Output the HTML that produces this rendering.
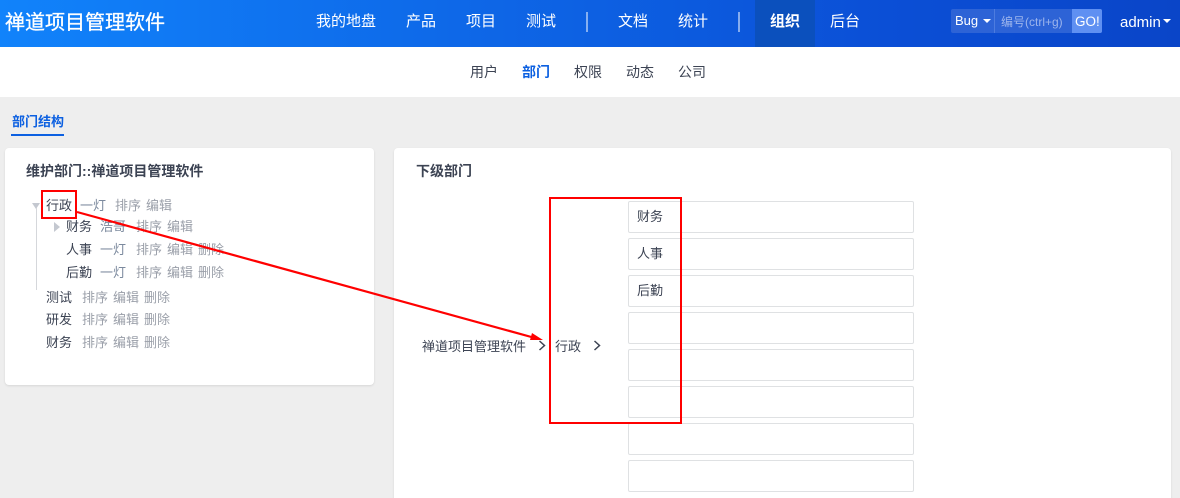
<!DOCTYPE html>
<html lang="zh-CN"><head><meta charset="utf-8"><title>部门结构</title>
<style>
*{box-sizing:border-box}
html,body{margin:0;padding:0;width:1180px;height:498px;overflow:hidden}
#root{position:relative;width:1180px;height:498px;overflow:hidden;background:#eee;font-family:"Liberation Sans","Noto Sans CJK SC",sans-serif;font-size:13px;color:#3c4353}
.t{position:absolute;white-space:nowrap;line-height:20px}
#hd{position:absolute;left:0;top:0;width:1180px;height:47px;background:linear-gradient(90deg,#1183fb,#0b4fd6 75%,#0a45c8)}
#hd .t{color:#fff;font-size:15px;line-height:20px;top:12px}
.sep{position:absolute;top:12px;width:2px;height:20px;background:rgba(255,255,255,.5)}
#sub{position:absolute;left:0;top:47px;width:1180px;height:50px;background:#fff}
#sub .t{font-size:14px;top:15px}
.card{position:absolute;background:#fff;border-radius:4px;box-shadow:0 1px 2px rgba(0,0,0,.1)}
.g{color:#9a9fa9}.b{color:#7c8a9e}
.in{position:absolute;left:628px;width:286px;height:32px;border:1px solid #dfe1e3;border-radius:2px;background:#fff;padding:0 8px;line-height:29px;color:#3c4353}
</style></head><body>
<div id="root">
<div id="hd">
<div class="t" style="left:5px;top:11px;font-size:20px;line-height:24px;-webkit-text-stroke:.3px #fff">禅道项目管理软件</div>
<div class="t" style="left:316px">我的地盘</div>
<div class="t" style="left:406px">产品</div>
<div class="t" style="left:466px">项目</div>
<div class="t" style="left:526px">测试</div>
<div class="sep" style="left:586px"></div>
<div class="t" style="left:618px">文档</div>
<div class="t" style="left:678px">统计</div>
<div class="sep" style="left:738px"></div>
<div style="position:absolute;left:755px;top:0;width:60px;height:47px;background:#0b50bd"></div>
<div class="t" style="left:770px;font-weight:700">组织</div>
<div class="t" style="left:830px">后台</div>
<div style="position:absolute;left:951px;top:9px;width:151px;height:24px;background:#2d63d6;border-radius:2px"></div>
<div style="position:absolute;left:994px;top:9px;width:1px;height:24px;background:#4d7cdf"></div>
<div style="position:absolute;left:1072px;top:9px;width:30px;height:24px;background:#5f90f2;border-radius:0 2px 2px 0"></div>
<div class="t" style="left:955px;top:11px;font-size:13px">Bug</div>
<div style="position:absolute;left:983px;top:19px;border:4px solid transparent;border-top:4px solid #fff;border-bottom:0"></div>
<div class="t" style="left:1001px;top:12px;font-size:12px;color:#9db5ec">编号(ctrl+g)</div>
<div class="t" style="left:1075px;top:12px;font-size:13.500px">GO!</div>
<div class="t" style="left:1120px;top:13px;font-size:15px">admin</div>
<div style="position:absolute;left:1163px;top:19px;border:4px solid transparent;border-top:4px solid #fff;border-bottom:0"></div>
</div>
<div id="sub">
<div class="t" style="left:470px">用户</div>
<div class="t" style="left:522px;color:#0c60e1;font-weight:700">部门</div>
<div class="t" style="left:574px">权限</div>
<div class="t" style="left:626px">动态</div>
<div class="t" style="left:678px">公司</div>
</div>
<div class="t" style="left:12px;top:112px;color:#0c60e1;font-weight:700">部门结构</div>
<div style="position:absolute;left:11px;top:134px;width:53px;height:2px;background:#0c60e1"></div>

<div class="card" style="left:5px;top:148px;width:369px;height:237px"></div>
<div class="t" style="left:26px;top:161px;font-size:14px;font-weight:700">维护部门::禅道项目管理软件</div>
<div style="position:absolute;left:32px;top:203px;border:4.500px solid transparent;border-top:6px solid #c4c8d0;border-bottom:0"></div>
<div style="position:absolute;left:54px;top:222px;border:5px solid transparent;border-left:6px solid #c4c8d0;border-right:0"></div>
<div style="position:absolute;left:36px;top:208px;width:1px;height:82px;background:#d5d7db"></div>
<div class="t" style="left:46px;top:196px">行政</div><div class="t b" style="left:80px;top:196px">一灯</div><div class="t g" style="left:115px;top:196px">排序</div><div class="t g" style="left:146px;top:196px">编辑</div>
<div class="t" style="left:66px;top:217px">财务</div><div class="t b" style="left:100px;top:217px">浩哥</div><div class="t g" style="left:136px;top:217px">排序</div><div class="t g" style="left:167px;top:217px">编辑</div>
<div class="t" style="left:66px;top:240px">人事</div><div class="t b" style="left:100px;top:240px">一灯</div><div class="t g" style="left:136px;top:240px">排序</div><div class="t g" style="left:167px;top:240px">编辑</div><div class="t g" style="left:198px;top:240px">删除</div>
<div class="t" style="left:66px;top:263px">后勤</div><div class="t b" style="left:100px;top:263px">一灯</div><div class="t g" style="left:136px;top:263px">排序</div><div class="t g" style="left:167px;top:263px">编辑</div><div class="t g" style="left:198px;top:263px">删除</div>
<div class="t" style="left:46px;top:288px">测试</div><div class="t g" style="left:82px;top:288px">排序</div><div class="t g" style="left:113px;top:288px">编辑</div><div class="t g" style="left:144px;top:288px">删除</div>
<div class="t" style="left:46px;top:310px">研发</div><div class="t g" style="left:82px;top:310px">排序</div><div class="t g" style="left:113px;top:310px">编辑</div><div class="t g" style="left:144px;top:310px">删除</div>
<div class="t" style="left:46px;top:333px">财务</div><div class="t g" style="left:82px;top:333px">排序</div><div class="t g" style="left:113px;top:333px">编辑</div><div class="t g" style="left:144px;top:333px">删除</div>

<div class="card" style="left:394px;top:148px;width:777px;height:350px;border-radius:4px 4px 0 0"></div>
<div class="t" style="left:416px;top:161px;font-size:14px;font-weight:700">下级部门</div>
<div class="in" style="top:201px">财务</div>
<div class="in" style="top:238px">人事</div>
<div class="in" style="top:275px">后勤</div>
<div class="in" style="top:312px"></div>
<div class="in" style="top:349px"></div>
<div class="in" style="top:386px"></div>
<div class="in" style="top:423px"></div>
<div class="in" style="top:460px"></div>
<div class="t" style="left:422px;top:337px">禅道项目管理软件</div>
<div class="t" style="left:555px;top:337px">行政</div>
<svg style="position:absolute;left:0;top:0" width="1180" height="498" viewBox="0 0 1180 498" fill="none">
<path d="M539.500 341l5 4.500-5 4.500M594.500 341l5 4.500-5 4.500" stroke="#3c4353" stroke-width="1.500"/>
<rect x="42" y="191" width="34" height="27" stroke="#f00" stroke-width="2"/>
<rect x="550" y="198" width="131" height="225" stroke="#f00" stroke-width="2"/>
<path d="M77 212L535 338" stroke="#f00" stroke-width="2.200"/>
<path d="M543 340L532 333 530 340Z" fill="#f00"/>
</svg>
</div>
</body></html>
